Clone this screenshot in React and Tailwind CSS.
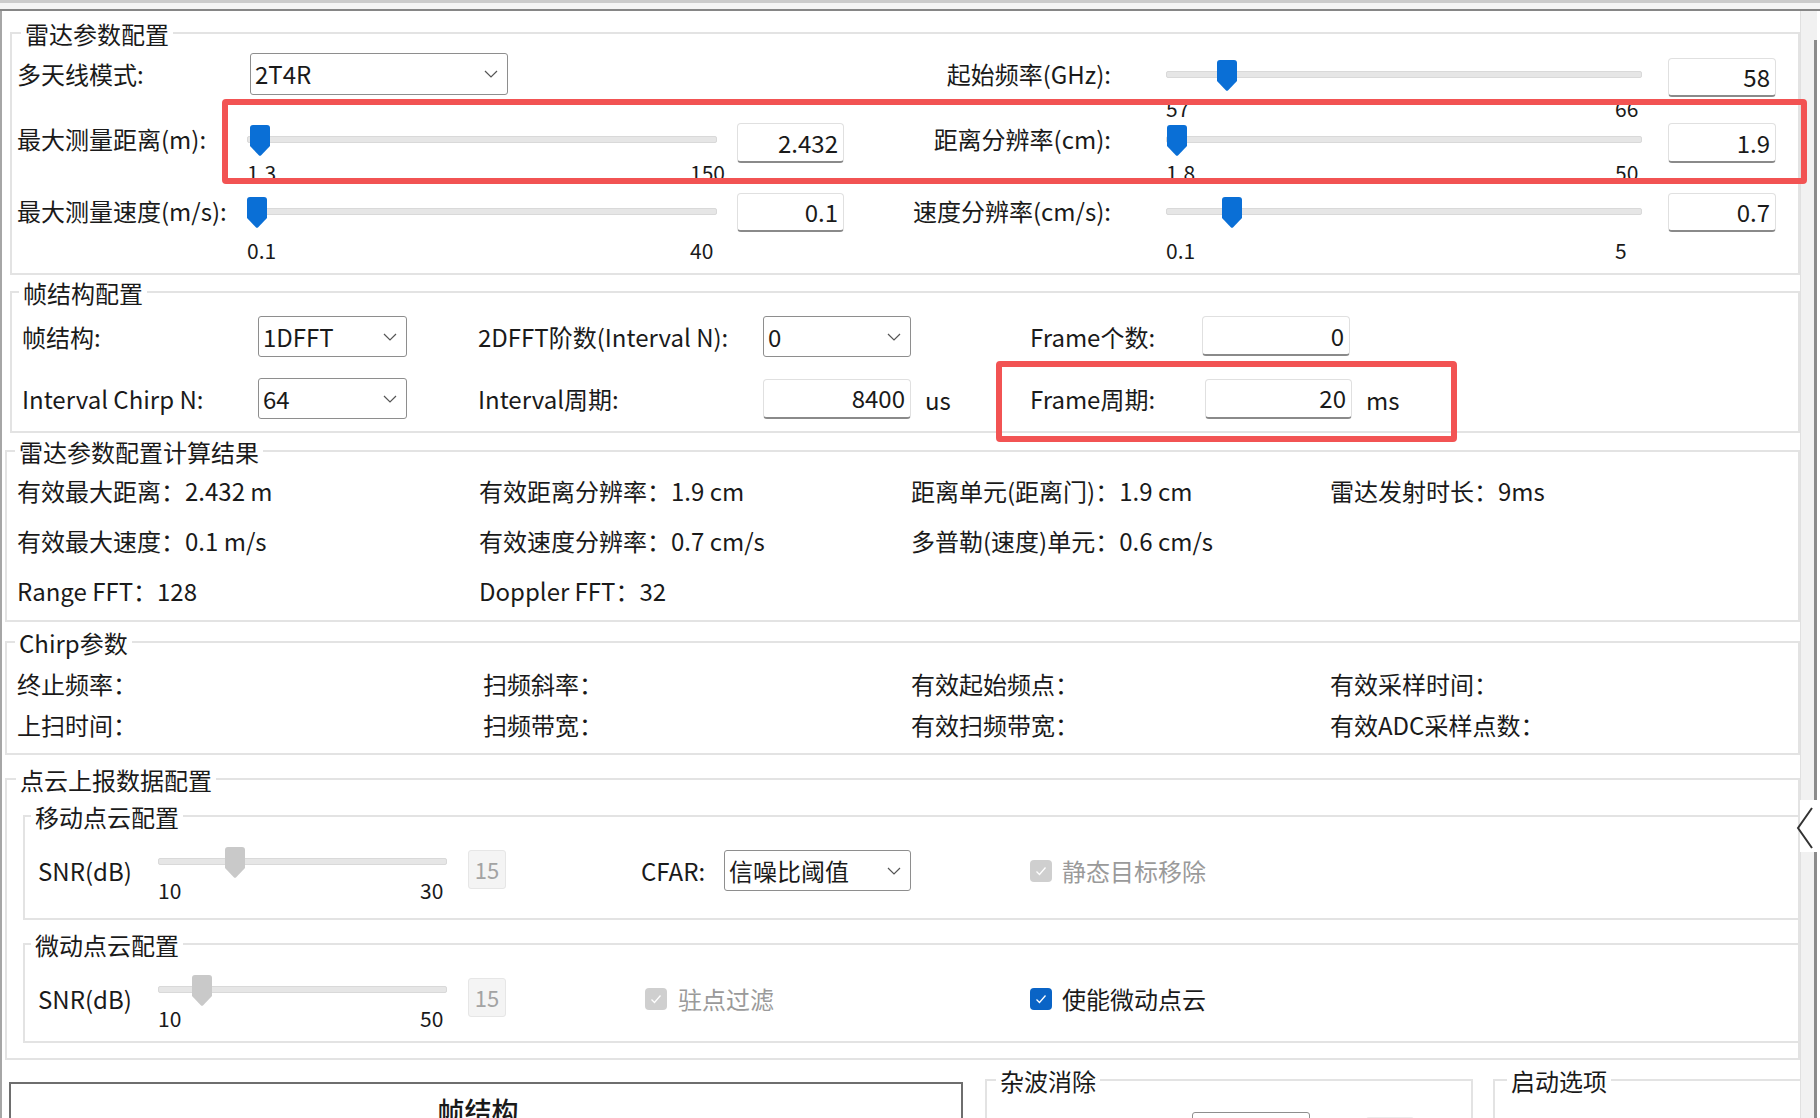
import React from "react";

function Thumb({ gray }) {
  return (
    <svg width="20" height="31" viewBox="0 0 20 31">
      <path
        d="M3 0H17Q20 0 20 3V21L11.2 30.2Q10 31.2 8.8 30.2L0 21V3Q0 0 3 0Z"
        fill={gray ? "#c9c9c9" : "#0a6fd6"}
      />
    </svg>
  );
}

function Slider({ wcls, px, min, max, value, gray, ctrl, lblcls, minLabel, maxLabel }) {
  const left = ((value - min) / (max - min)) * (px - 20);
  return (
    <div className={"flex flex-col shrink-0 " + wcls}>
      <div className={"relative flex items-center " + ctrl}>
        <div className="w-full h-[7px] rounded-[2px] bg-[#e6e6e6] border border-[#d9d9d9]" />
        <div className="absolute top-[calc(50%-14px)] flex" style={{ left }}>
          <Thumb gray={gray} />
        </div>
      </div>
      {minLabel !== undefined && (
        <div className={"flex justify-between text-[21px] leading-[24px] " + lblcls}>
          <span>{minLabel}</span>
          <span className="w-[27px] whitespace-nowrap">{maxLabel}</span>
        </div>
      )}
    </div>
  );
}

function TBox({ cls, children }) {
  return (
    <div
      className={
        "shrink-0 flex items-center justify-end pr-[5px] bg-white border border-[#e0e0e0] border-b-2 border-b-[#8a8a8a] rounded-[4px] text-[24px] " +
        cls
      }
    >
      {children}
    </div>
  );
}

function DBox({ cls, children }) {
  return (
    <div
      className={
        "shrink-0 flex items-center justify-center bg-[#f4f4f4] border border-[#e6e6e6] rounded-[3px] text-[22px] text-[#a3a3a3] " +
        cls
      }
    >
      {children}
    </div>
  );
}

function Sel({ cls, children }) {
  return (
    <div
      className={
        "shrink-0 flex items-center justify-between pl-[4px] pr-[9px] bg-white border border-[#8e8e8e] rounded-[3px] text-[24px] " +
        cls
      }
    >
      <span>{children}</span>
      <svg width="14" height="8" viewBox="0 0 14 8">
        <path d="M1 1L7 7L13 1" fill="none" stroke="#555" strokeWidth="1.2" />
      </svg>
    </div>
  );
}

function Check({ on }) {
  return (
    <div
      className={
        on
          ? "shrink-0 w-[22px] h-[22px] rounded-[4px] bg-[#0a64c6] flex items-center justify-center"
          : "shrink-0 w-[22px] h-[22px] rounded-[4px] bg-[#cfcfcf] flex items-center justify-center"
      }
    >
      <svg width="12" height="10" viewBox="0 0 12 10">
        <path d="M1.5 5.5L4.5 8.5L10.5 1.5" fill="none" stroke="#fff" strokeWidth="1.3" />
      </svg>
    </div>
  );
}

function Grp({ cls, tcls, title, children }) {
  return (
    <div className={"relative border-2 border-[#e3e3e3] " + cls}>
      <span
        className={
          "absolute top-[-16px] bg-white px-[4px] leading-[32px] text-[24px] whitespace-nowrap " + tcls
        }
      >
        {title}
      </span>
      {children}
    </div>
  );
}

export default function App() {
  return (
    <div className="w-[1820px] h-[1118px] overflow-hidden bg-white relative text-[#1a1a1a] text-[24px] font-['Noto_Sans_CJK_SC','Noto_Sans',sans-serif]">
      {/* top band */}
      <div className="h-[3px] bg-[#cbcbcb]" />
      <div className="h-[6px] bg-[#f4f4f4]" />
      <div className="h-[2px] bg-[#868686]" />

      <div className="flex h-[1107px]">
        {/* content */}
        <div className="w-[1800px] border-l-2 border-[#a6a6a6] flex flex-col">
          {/* G1 */}
          <Grp cls="ml-[8px] mt-[21px] h-[243px] pt-[19px] pl-[5px] shrink-0" tcls="left-[9px]" title="雷达参数配置">
            <div className="flex items-start h-[66px]">
              <div className="w-[827px] shrink-0 flex items-start">
                <div className="w-[230px] shrink-0 h-[42px] flex items-center">多天线模式:</div>
                <Sel cls="ml-[3px] w-[258px] h-[42px]">2T4R</Sel>
              </div>
              <div className="w-[267px] shrink-0 h-[42px] flex items-center justify-end">起始频率(GHz):</div>
              <Slider wcls="ml-[55px] w-[476px]" px={476} min={57} max={66} value={58} ctrl="h-[42px]" lblcls="mt-[1px]" minLabel="57" maxLabel="66" />
              <TBox cls="ml-[26px] w-[108px] h-[39px] mt-[5px]">58</TBox>
            </div>
            <div className="flex items-start h-[72px]">
              <div className="w-[230px] shrink-0 h-[40px] flex items-center">最大测量距离(m):</div>
              <Slider wcls="w-[470px]" px={470} min={1.3} max={150} value={2.432} ctrl="h-[40px]" lblcls="mt-[1px]" minLabel="1.3" maxLabel="150" />
              <TBox cls="ml-[20px] w-[107px] h-[40px] mt-[4px]">2.432</TBox>
              <div className="w-[267px] shrink-0 h-[40px] flex items-center justify-end">距离分辨率(cm):</div>
              <Slider wcls="ml-[55px] w-[476px]" px={476} min={1.8} max={50} value={1.9} ctrl="h-[40px]" lblcls="mt-[1px]" minLabel="1.8" maxLabel="50" />
              <TBox cls="ml-[26px] w-[108px] h-[40px] mt-[4px]">1.9</TBox>
            </div>
            <div className="flex items-start">
              <div className="w-[230px] shrink-0 h-[40px] flex items-center">最大测量速度(m/s):</div>
              <Slider wcls="w-[470px]" px={470} min={0.1} max={40} value={0.1} ctrl="h-[40px]" lblcls="mt-[7px]" minLabel="0.1" maxLabel="40" />
              <TBox cls="ml-[20px] w-[107px] h-[39px] mt-[2px]">0.1</TBox>
              <div className="w-[267px] shrink-0 h-[40px] flex items-center justify-end">速度分辨率(cm/s):</div>
              <Slider wcls="ml-[55px] w-[476px]" px={476} min={0.1} max={5} value={0.7} ctrl="h-[40px]" lblcls="mt-[7px]" minLabel="0.1" maxLabel="5" />
              <TBox cls="ml-[26px] w-[108px] h-[39px] mt-[2px]">0.7</TBox>
            </div>
          </Grp>

          {/* G2 */}
          <Grp cls="ml-[8px] mt-[16px] h-[142px] pt-[23px] pl-[10px] shrink-0" tcls="left-[7px]" title="帧结构配置">
            <div className="flex h-[62px] items-start">
              <div className="w-[236px] shrink-0 h-[41px] flex items-center">帧结构:</div>
              <Sel cls="w-[149px] h-[41px]">1DFFT</Sel>
              <div className="ml-[71px] w-[285px] shrink-0 h-[41px] flex items-center">2DFFT阶数(Interval N):</div>
              <Sel cls="w-[148px] h-[41px]">0</Sel>
              <div className="ml-[119px] w-[172px] shrink-0 h-[41px] flex items-center">Frame个数:</div>
              <TBox cls="w-[148px] h-[40px]">0</TBox>
            </div>
            <div className="flex items-center h-[41px]">
              <div className="w-[236px] shrink-0 h-[41px] flex items-center">Interval Chirp N:</div>
              <Sel cls="w-[149px] h-[41px]">64</Sel>
              <div className="ml-[71px] w-[285px] shrink-0 h-[41px] flex items-center">Interval周期:</div>
              <TBox cls="w-[148px] h-[40px]">8400</TBox>
              <div className="w-[119px] shrink-0 pl-[14px] pt-[3px]">us</div>
              <div className="w-[175px] shrink-0 h-[41px] flex items-center">Frame周期:</div>
              <TBox cls="w-[147px] h-[40px]">20</TBox>
              <div className="ml-[14px] pt-[3px]">ms</div>
            </div>
          </Grp>

          {/* G3 */}
          <Grp cls="ml-[3px] mt-[17px] h-[172px] pt-[14px] pl-[10px] shrink-0" tcls="left-[8px]" title="雷达参数配置计算结果">
            <div className="grid grid-cols-[462px_432px_419px_1fr] auto-rows-[50px] items-center">
              <div>有效最大距离：2.432 m</div>
              <div>有效距离分辨率：1.9 cm</div>
              <div>距离单元(距离门)：1.9 cm</div>
              <div>雷达发射时长：9ms</div>
              <div>有效最大速度：0.1 m/s</div>
              <div>有效速度分辨率：0.7 cm/s</div>
              <div>多普勒(速度)单元：0.6 cm/s</div>
              <div />
              <div>Range FFT：128</div>
              <div>Doppler FFT：32</div>
            </div>
          </Grp>

          {/* G4 */}
          <Grp cls="ml-[3px] mt-[19px] h-[114px] pt-[20px] pl-[10px] shrink-0" tcls="left-[8px]" title="Chirp参数">
            <div className="grid grid-cols-[466px_428px_419px_1fr] auto-rows-[41px] items-center">
              <div>终止频率：</div>
              <div>扫频斜率：</div>
              <div>有效起始频点：</div>
              <div>有效采样时间：</div>
              <div>上扫时间：</div>
              <div>扫频带宽：</div>
              <div>有效扫频带宽：</div>
              <div>有效ADC采样点数：</div>
            </div>
          </Grp>

          {/* G5 */}
          <Grp cls="ml-[3px] mt-[23px] h-[282px] pt-[35px] pl-[16px] shrink-0" tcls="left-[9px]" title="点云上报数据配置">
            <Grp cls="h-[105px] pt-[33px] pl-[13px] border-r-0" tcls="left-[6px]" title="移动点云配置">
              <div className="flex items-start h-[41px]">
                <div className="w-[120px] shrink-0 h-[41px] flex items-center">SNR(dB)</div>
                <Slider wcls="w-[289px]" px={289} min={10} max={30} value={15} gray ctrl="h-[22px]" lblcls="mt-[6px]" minLabel="10" maxLabel="30" />
                <DBox cls="ml-[21px] w-[38px] h-[39px]">15</DBox>
                <div className="ml-[135px] w-[83px] shrink-0 h-[41px] flex items-center">CFAR:</div>
                <Sel cls="w-[187px] h-[41px]">信噪比阈值</Sel>
                <div className="ml-[119px] h-[41px] flex items-center gap-[10px] text-[#9a9a9a]">
                  <Check />
                  <span>静态目标移除</span>
                </div>
              </div>
            </Grp>
            <Grp cls="mt-[23px] h-[100px] pt-[33px] pl-[13px] border-r-0" tcls="left-[6px]" title="微动点云配置">
              <div className="flex items-start h-[41px]">
                <div className="w-[120px] shrink-0 h-[41px] flex items-center">SNR(dB)</div>
                <Slider wcls="w-[289px]" px={289} min={10} max={50} value={15} gray ctrl="h-[22px]" lblcls="mt-[6px]" minLabel="10" maxLabel="50" />
                <DBox cls="ml-[21px] w-[38px] h-[39px]">15</DBox>
                <div className="ml-[139px] w-[385px] shrink-0 h-[41px] flex items-center gap-[11px] text-[#9a9a9a]">
                  <Check />
                  <span>驻点过滤</span>
                </div>
                <div className="h-[41px] flex items-center gap-[10px]">
                  <Check on />
                  <span>使能微动点云</span>
                </div>
              </div>
            </Grp>
          </Grp>

          {/* bottom row */}
          <div className="flex items-start mt-[22px] shrink-0">
            <div className="ml-[7px] w-[954px] h-[60px] shrink-0 border-2 border-[#6e6e6e] pt-[9px] pr-[16px] text-center text-[27px] leading-[36px] font-medium">
              帧结构
            </div>
            <Grp cls="ml-[22px] mt-[-3px] w-[488px] h-[60px] shrink-0 flex items-start" tcls="left-[9px]" title="杂波消除">
              <div className="ml-[205px] mt-[31px] w-[118px] h-[40px] shrink-0 border border-[#8e8e8e] rounded-[3px]" />
              <div className="ml-[56px] mt-[36px] w-[48px] h-[8px] shrink-0 rounded-[3px] bg-[#ececec]" />
            </Grp>
            <Grp cls="ml-[20px] mt-[-3px] w-[307px] h-[60px] shrink-0 border-r-0" tcls="left-[12px]" title="启动选项" />
          </div>
        </div>

        {/* scrollbar */}
        <div className="w-[20px] relative flex flex-col">
          <div className="h-[789px] flex shrink-0">
            <div className="w-[1px] bg-[#e0e0e0]" />
            <div className="w-[13px] bg-[#f1f1f1]" />
            <div className="w-[3px] flex flex-col">
              <div className="h-[29px] bg-[#f1f1f1]" />
              <div className="flex-1 bg-[#8b8b8b]" />
            </div>
          </div>
          <div className="h-[52px] shrink-0" />
          <div className="flex-1 flex">
            <div className="w-[1px] bg-[#e0e0e0]" />
            <div className="w-[13px] bg-[#f1f1f1]" />
            <div className="w-[3px] bg-[#8b8b8b]" />
          </div>
          <svg className="absolute left-[-4px] top-[796px]" width="18" height="42" viewBox="0 0 18 42">
            <path d="M16 1L2 21L16 41" fill="none" stroke="#333" strokeWidth="2" />
          </svg>
        </div>
      </div>

      {/* red annotation boxes */}
      <div className="absolute left-[222px] top-[99px] w-[1585px] h-[85px] border-[6px] border-[#f25353] rounded-[4px]" />
      <div className="absolute left-[996px] top-[361px] w-[461px] h-[81px] border-[6px] border-[#f25353] rounded-[4px]" />
    </div>
  );
}
